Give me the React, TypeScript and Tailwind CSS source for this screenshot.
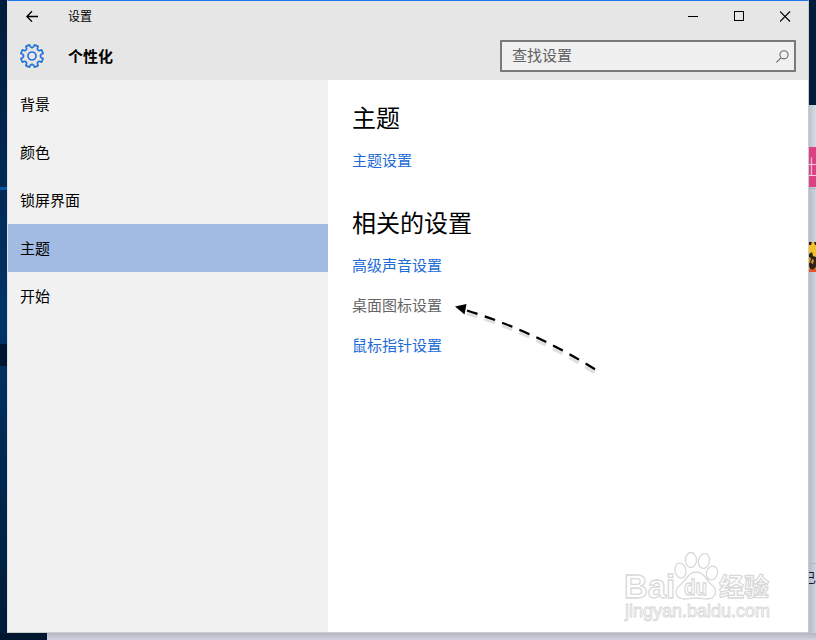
import { ReactNode } from "react";

const navItems = ["背景", "颜色", "锁屏界面", "主题", "开始"];

const relatedLinks = [
  { label: "高级声音设置", pressed: false },
  { label: "桌面图标设置", pressed: true },
  { label: "鼠标指针设置", pressed: false },
];

const point = (radius: number, degrees: number) => {
  const a = (degrees * Math.PI) / 180;
  return `${(12 + radius * Math.cos(a)).toFixed(2)} ${(12 + radius * Math.sin(a)).toFixed(2)}`;
};

// Eight teeth with a rounded notch between each pair
const gearPath =
  Array.from({ length: 8 }, (_, i) => {
    const a = 22.5 + i * 45;
    return `${i === 0 ? "M" : "L"}${point(11.4, a - 10)} L${point(11.4, a + 10)} C${point(7.6, a + 12)} ${point(7.6, a + 33)} ${point(11.4, a + 35)}`;
  }).join(" ") + "Z";

const GearIcon = () => (
  <svg width="24" height="24" viewBox="0 0 24 24" fill="none" stroke="#2673d9" strokeWidth="1.7" strokeLinejoin="round" className="overflow-visible">
    <path d={gearPath} />
    <circle cx="12" cy="12" r="4" />
  </svg>
);

const TitleBar = () => (
  <div className="h-[30px] flex items-center justify-between">
    <div className="flex items-center pl-[18px]">
      <svg width="12" height="12" viewBox="0 0 12 12" fill="none" stroke="#000" strokeWidth="1.3">
        <path d="M12 6.5H1M6 1.2L.9 6.5L6 11.7" />
      </svg>
      <span className="pl-[30px] text-[12px] leading-[16px]">设置</span>
    </div>

    {/* Window buttons */}
    <div className="flex items-center gap-x-[35px] pr-[17px]">
      <svg width="11" height="11" viewBox="0 0 11 11" shapeRendering="crispEdges">
        <path d="M0 5.5H10" stroke="#000" />
      </svg>
      <svg width="11" height="11" viewBox="0 0 11 11" shapeRendering="crispEdges">
        <path d="M.5 .5H9.5V9.5H.5Z" fill="none" stroke="#000" />
      </svg>
      <svg width="11" height="11" viewBox="0 0 11 11">
        <path d="M0 .5L10 10.5M10 .5L0 10.5" stroke="#000" strokeWidth="1.1" />
      </svg>
    </div>
  </div>
);

const Header = () => (
  <div className="h-[49px] flex items-center justify-between pl-[12px] pr-[12px]">
    <div className="flex items-center">
      <GearIcon />
      <h1 className="pl-[24px] text-[15px] leading-[20px] font-bold">个性化</h1>
    </div>

    {/* Search */}
    <div className="w-[296px] h-[32px] mt-[1px] flex items-center justify-between border-2 border-[#7a7a7a] bg-[#f0f0f0] pl-[10px] pr-[5px]">
      <span className="-mt-[2px] text-[15px] leading-[20px] text-[#606060]">查找设置</span>
      <svg width="13" height="13" viewBox="0 0 13 13" fill="none" stroke="#6b6b6b" strokeWidth="1.1">
        <circle cx="8" cy="4.8" r="4.1" />
        <path d="M5 7.8L.4 12.4" />
      </svg>
    </div>
  </div>
);

const SideNav = () => (
  <nav className="w-[320px] shrink-0 bg-[#f1f1f1]">
    {navItems.map((item) => (
      <div
        key={item}
        className={`h-[48px] flex items-center pl-[12px] text-[15px] ${item === "主题" ? "bg-[#a1bbe3]" : ""}`}
      >
        {item}
      </div>
    ))}
  </nav>
);

const Heading = ({ children }: { children: ReactNode }) => (
  <h2 className="text-[24px] leading-[32px]">{children}</h2>
);

// Dashed pointer towards the desktop icon link
const Arrow = () => (
  <svg className="absolute left-[120px] top-[216px]" width="160" height="90" viewBox="0 0 160 90">
    <path d="M19 17Q88 38 149 78" fill="none" stroke="#000" strokeWidth="4" strokeDasharray="11 7.6" opacity=".12" />
    <path d="M19 14.5Q88 36 149 74.5" fill="none" stroke="#000" strokeWidth="2.2" strokeDasharray="11 7.6" />
    <path d="M7 10.5L18.5 8L16.5 18.5Z" fill="#000" />
  </svg>
);

const Watermark = () => (
  <svg
    className="absolute left-[290px] top-[468px] font-['Liberation_Sans','Noto_Sans_CJK_SC',sans-serif]"
    width="160"
    height="80"
    viewBox="0 0 160 80"
    fill="#fff"
    stroke="#d9d9d9"
    strokeWidth="1.3"
  >
    <text x="6" y="50" fontSize="34" fontWeight="bold" textLength="51" lengthAdjust="spacingAndGlyphs">Bai</text>
    <path d="M78 24C70 24 69 32 62 37C55 43 58 51 67 51C72 51 74 50 78 50C83 50 85 51 89 51C98 51 100 42 94 37C87 32 87 24 78 24Z" />
    <ellipse cx="62.5" cy="22.5" rx="5.5" ry="7.5" transform="rotate(-12 62.5 22.5)" />
    <ellipse cx="73" cy="12" rx="5.5" ry="7.5" />
    <ellipse cx="86" cy="13" rx="5.5" ry="7.5" transform="rotate(12 86 13)" />
    <ellipse cx="94" cy="25" rx="5.5" ry="7" transform="rotate(20 94 25)" />
    <text x="66" y="47" fontSize="22" fontWeight="bold" textLength="23" lengthAdjust="spacingAndGlyphs">du</text>
    <text x="101" y="48" fontSize="25" fontWeight="bold" textLength="50" lengthAdjust="spacingAndGlyphs">经验</text>
    <text x="7" y="69" fontSize="18" strokeWidth=".9" textLength="145" lengthAdjust="spacingAndGlyphs">jingyan.baidu.com</text>
  </svg>
);

const ThemePage = () => (
  <main className="relative flex-1 bg-white pl-[24px] pt-[21px]">
    <Heading>主题</Heading>
    <p className="pt-[17px] text-[15px] leading-[20px] text-[#1d6bd6]">主题设置</p>

    <div className="pt-[36px]">
      <Heading>相关的设置</Heading>
    </div>
    <div className="flex flex-col gap-y-[20px] pt-[17px]">
      {relatedLinks.map((link) => (
        <p
          key={link.label}
          className={`text-[15px] leading-[20px] ${link.pressed ? "text-[#666666]" : "text-[#1d6bd6]"}`}
        >
          {link.label}
        </p>
      ))}
    </div>

    <Arrow />
    <Watermark />
  </main>
);

// What shows of the desktop and the page behind, right of the window
const RightEdge = () => (
  <div className="w-[7px] h-full shrink-0 overflow-hidden bg-linear-to-r from-[#b4bac8] to-[#d3d5e0]">
    <div className="h-[105px] bg-[#011b3b]" />
    <div className="h-[42px] bg-linear-to-r from-[#bac2ce] to-[#d8dce4]" />
    <div className="h-[40px] flex items-center justify-center bg-[#dc4283] text-[20px] font-light text-[#f5cfe0]">
      <span className="-ml-[2px]">土</span>
    </div>
    <div className="h-[1px] mt-[1px] bg-[#aeb8c4]" />
    <svg className="block mt-[53px]" width="7" height="30" viewBox="0 0 7 30">
      <path d="M0 0H7V30H0Z" fill="#f2c02c" />
      <path d="M0 0H3L2 3H0ZM5 0H7V3H6ZM0 12L3 10L4 14L7 15V25L4 28L1 27L0 24Z" fill="#2e2219" />
      <path d="M0 15L2 16L1 21H0ZM3 17L5 18L4 22L2 21Z" fill="#d8952a" />
      <path d="M0 27L4 28L7 26V30H0Z" fill="#ec502b" />
    </svg>
    <div className="h-[291px]" />
    <div className="h-[1px] bg-[#b3b8c3]" />
    <div className="mt-[4px] -ml-[6px] w-[14px] text-[13px] leading-[18px] text-[#17152f]">已</div>
  </div>
);

const App = () => {
  return (
    <div className="w-[816px] h-[640px] overflow-hidden flex flex-col bg-[#cdced9] text-black font-['Noto_Sans_CJK_SC',sans-serif]">
      <div className="h-[633px] flex">
        <div className="w-[7px] shrink-0 bg-linear-to-b from-[#011c3c] via-[#003467] to-[#001b38]">
          <div className="h-[187px]" />
          <div className="h-[3px] bg-[#0755a0]" />
          <div className="h-[154px]" />
          <div className="h-[22px] bg-[#001630]" />
        </div>

        <div className="flex-1 flex flex-col border-t border-t-[#1b78ee] border-l border-l-[#dfe1e5] border-r border-r-[#c9cbcf] border-b border-b-[#c9cbcd]">
          <div className="bg-[#e6e6e6]">
            <TitleBar />
            <Header />
          </div>
          <div className="flex-1 flex">
            <SideNav />
            <ThemePage />
          </div>
        </div>

        <RightEdge />
      </div>

      <div className="flex-1 flex">
        <div className="w-[47px] bg-[#00172f]" />
        <div className="flex-1 bg-linear-to-b from-[#b5b6c1] to-[#d1d2df]" />
      </div>
    </div>
  );
};

export default App;
